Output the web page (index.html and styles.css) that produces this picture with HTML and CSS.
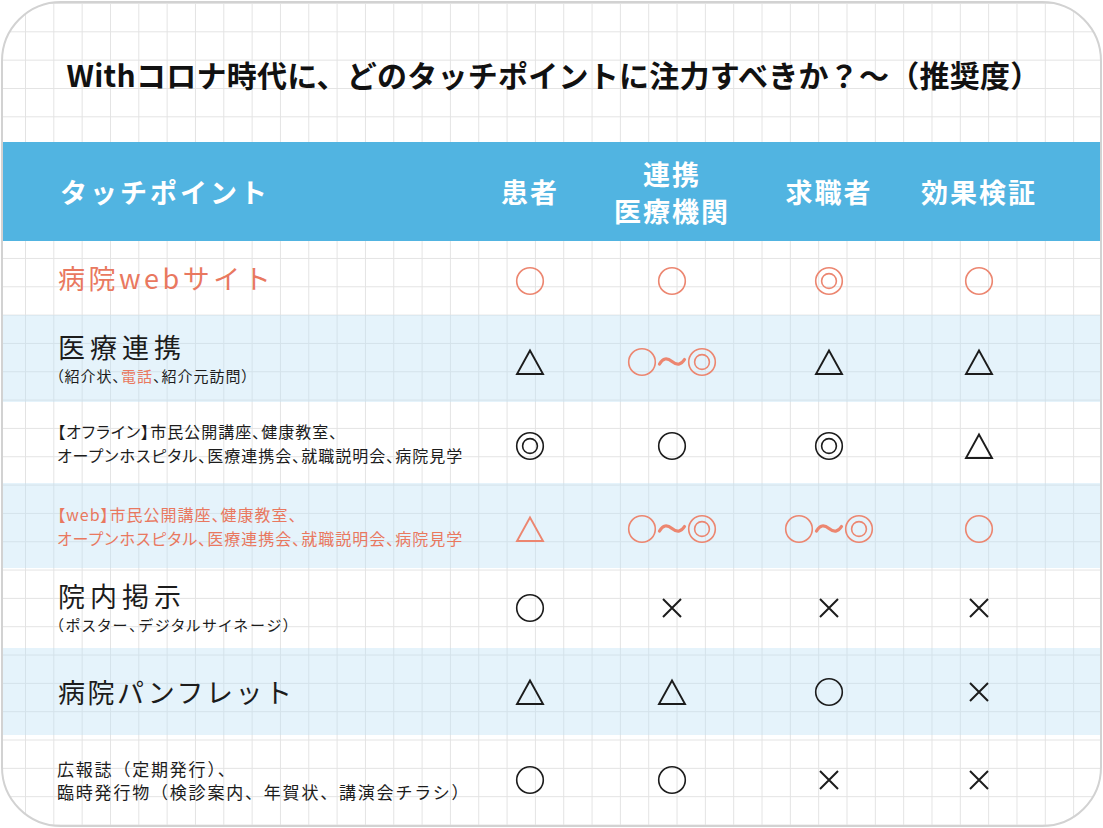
FILE: index.html
```html
<!DOCTYPE html>
<html lang="ja">
<head>
<meta charset="utf-8">
<title>Withコロナ時代に、どのタッチポイントに注力すべきか？</title>
<link rel="stylesheet" href="styles.css">
</head>
<body>
<svg class="defs" width="0" height="0" aria-hidden="true">
  <defs>
    <symbol id="s-circle" viewBox="0 0 30 30"><circle cx="15" cy="15" r="13.3" fill="none" stroke="currentColor" stroke-width="1.6"/></symbol>
    <symbol id="s-double" viewBox="0 0 30 30"><circle cx="15" cy="15" r="13.3" fill="none" stroke="currentColor" stroke-width="1.6"/><circle cx="15" cy="15" r="7.4" fill="none" stroke="currentColor" stroke-width="1.6"/></symbol>
    <symbol id="s-tri" viewBox="0 0 30 30"><polygon points="15,3.5 2,27 28,27" fill="none" stroke="currentColor" stroke-width="1.9" stroke-linejoin="miter"/></symbol>
    <symbol id="s-cross" viewBox="0 0 30 30"><path d="M6 6 L24 24 M24 6 L6 24" fill="none" stroke="currentColor" stroke-width="2"/></symbol>
    <symbol id="s-tilde" viewBox="0 0 30 30"><path d="M2.5 17 C6 11 10 10.5 15 14.5 C20 18.5 24 18 27.5 12.5" fill="none" stroke="currentColor" stroke-width="3.2" stroke-linecap="round"/></symbol>
  </defs>
</svg>
<main class="card">
  <h1 class="title">Withコロナ時代に、どのタッチポイントに注力すべきか？～（推奨度）</h1>
  <section class="table">
    <div class="row head">
      <div class="cell label">タッチポイント</div>
      <div class="cell">患者</div>
      <div class="cell two">連携<br>医療機関</div>
      <div class="cell">求職者</div>
      <div class="cell">効果検証</div>
    </div>

    <div class="row r1 shift">
      <div class="cell label big mid orange">病院webサイト</div>
      <div class="cell mark orange-sym"><svg class="sym"><use href="#s-circle"/></svg></div>
      <div class="cell mark orange-sym"><svg class="sym"><use href="#s-circle"/></svg></div>
      <div class="cell mark orange-sym"><svg class="sym"><use href="#s-double"/></svg></div>
      <div class="cell mark orange-sym"><svg class="sym"><use href="#s-circle"/></svg></div>
    </div>

    <div class="row r2 band shift">
      <div class="cell label">
        <div class="stack">
          <span class="big wide">医療連携</span>
          <span class="sub">（紹介状、<span class="orange">電話</span>、紹介元訪問）</span>
        </div>
      </div>
      <div class="cell mark"><svg class="sym"><use href="#s-tri"/></svg></div>
      <div class="cell mark orange-sym"><span class="combo"><svg class="sym"><use href="#s-circle"/></svg><svg class="sym"><use href="#s-tilde"/></svg><svg class="sym"><use href="#s-double"/></svg></span></div>
      <div class="cell mark"><svg class="sym"><use href="#s-tri"/></svg></div>
      <div class="cell mark"><svg class="sym"><use href="#s-tri"/></svg></div>
    </div>

    <div class="row r3 shift">
      <div class="cell label small">【オフライン】市民公開講座、健康教室、<br>オープンホスピタル、医療連携会、就職説明会、病院見学</div>
      <div class="cell mark"><svg class="sym"><use href="#s-double"/></svg></div>
      <div class="cell mark"><svg class="sym"><use href="#s-circle"/></svg></div>
      <div class="cell mark"><svg class="sym"><use href="#s-double"/></svg></div>
      <div class="cell mark"><svg class="sym"><use href="#s-tri"/></svg></div>
    </div>

    <div class="row r4 band shift">
      <div class="cell label small orange">【web】市民公開講座、健康教室、<br>オープンホスピタル、医療連携会、就職説明会、病院見学</div>
      <div class="cell mark orange-sym"><svg class="sym"><use href="#s-tri"/></svg></div>
      <div class="cell mark orange-sym"><span class="combo"><svg class="sym"><use href="#s-circle"/></svg><svg class="sym"><use href="#s-tilde"/></svg><svg class="sym"><use href="#s-double"/></svg></span></div>
      <div class="cell mark orange-sym"><span class="combo"><svg class="sym"><use href="#s-circle"/></svg><svg class="sym"><use href="#s-tilde"/></svg><svg class="sym"><use href="#s-double"/></svg></span></div>
      <div class="cell mark orange-sym"><svg class="sym"><use href="#s-circle"/></svg></div>
    </div>

    <div class="row r5">
      <div class="cell label">
        <div class="stack">
          <span class="big wide">院内掲示</span>
          <span class="sub kana">（ポスター、デジタルサイネージ）</span>
        </div>
      </div>
      <div class="cell mark"><svg class="sym"><use href="#s-circle"/></svg></div>
      <div class="cell mark"><svg class="sym"><use href="#s-cross"/></svg></div>
      <div class="cell mark"><svg class="sym"><use href="#s-cross"/></svg></div>
      <div class="cell mark"><svg class="sym"><use href="#s-cross"/></svg></div>
    </div>

    <div class="row r6 band">
      <div class="cell label big">病院パンフレット</div>
      <div class="cell mark"><svg class="sym"><use href="#s-tri"/></svg></div>
      <div class="cell mark"><svg class="sym"><use href="#s-tri"/></svg></div>
      <div class="cell mark"><svg class="sym"><use href="#s-circle"/></svg></div>
      <div class="cell mark"><svg class="sym"><use href="#s-cross"/></svg></div>
    </div>

    <div class="row r7">
      <div class="cell label small plain">広報誌（定期発行）、<br>臨時発行物（検診案内、年賀状、講演会チラシ）</div>
      <div class="cell mark"><svg class="sym"><use href="#s-circle"/></svg></div>
      <div class="cell mark"><svg class="sym"><use href="#s-circle"/></svg></div>
      <div class="cell mark"><svg class="sym"><use href="#s-cross"/></svg></div>
      <div class="cell mark"><svg class="sym"><use href="#s-cross"/></svg></div>
    </div>
  </section>
</main>
</body>
</html>
```

FILE: styles.css
```css
html, body {
  margin: 0;
  padding: 0;
  background: #ffffff;
}

body {
  font-family: "Noto Sans CJK JP", "Noto Sans", sans-serif;
  color: #1c1c1c;
}

.defs {
  position: absolute;
  width: 0;
  height: 0;
  overflow: hidden;
}

.card {
  box-sizing: border-box;
  width: 1101px;
  height: 826px;
  margin: 1px;
  border: 2px solid #d2d2d2;
  border-radius: 60px;
  overflow: hidden;
  display: flex;
  flex-direction: column;
  background-color: #ffffff;
  background-image:
    linear-gradient(to right, #e3e3e3 1px, transparent 1px),
    linear-gradient(to bottom, #e3e3e3 1px, transparent 1px);
  background-size: 28.333px 28.333px;
  background-position: 22px 0px, 0px 0px;
}

.title {
  margin: 0;
  height: 139px;
  flex: none;
  display: flex;
  align-items: center;
  justify-content: center;
  padding-top: 2px;
  padding-left: 4px;
  box-sizing: border-box;
  font-size: 30px;
  font-weight: 700;
  letter-spacing: 0.25px;
  color: #111111;
}

.table {
  flex: 1;
  display: grid;
  grid-template-rows: 99px 74px 87px 81px 85px 80px 87px 1fr;
}

.row {
  display: grid;
  grid-template-columns: 457px 140px 144px 170px 130px 1fr;
}

.band {
  background: rgba(190, 224, 246, 0.4);
}

.cell {
  display: flex;
  align-items: center;
  justify-content: center;
  min-width: 0;
}

.cell.label {
  justify-content: flex-start;
  padding-left: 55px;
  white-space: nowrap;
}

.shift .mark {
  padding-top: 6px;
}

.head {
  background: #51b4e1;
  color: #ffffff;
  font-size: 27px;
  font-weight: 700;
  letter-spacing: 2px;
}

.head .cell {
  text-align: center;
  line-height: 37px;
}

.head .cell.label {
  padding-left: 57px;
  letter-spacing: 3px;
}

.big {
  font-size: 27px;
  letter-spacing: 2.5px;
  line-height: 30px;
}

.big.mid {
  letter-spacing: 3.5px;
}

.big.wide {
  letter-spacing: 5px;
}

.stack {
  display: flex;
  flex-direction: column;
  gap: 4px;
}

.sub {
  font-size: 15px;
  line-height: 20px;
  letter-spacing: 1px;
  font-feature-settings: "palt";
  margin-left: -2px;
}

.sub.kana {
  letter-spacing: 2px;
}

.small {
  font-size: 16px;
  line-height: 24px;
  letter-spacing: 1px;
  font-feature-settings: "palt";
}

.small.plain {
  font-size: 17px;
  line-height: 23px;
  letter-spacing: 1.8px;
  font-feature-settings: normal;
}

.cell.label.small {
  padding-left: 54px;
}

.orange {
  color: #e9785f;
}

.orange-sym {
  color: #ec8670;
}

.sym {
  width: 30px;
  height: 30px;
  display: block;
}

.combo {
  display: flex;
  align-items: center;
}
```
